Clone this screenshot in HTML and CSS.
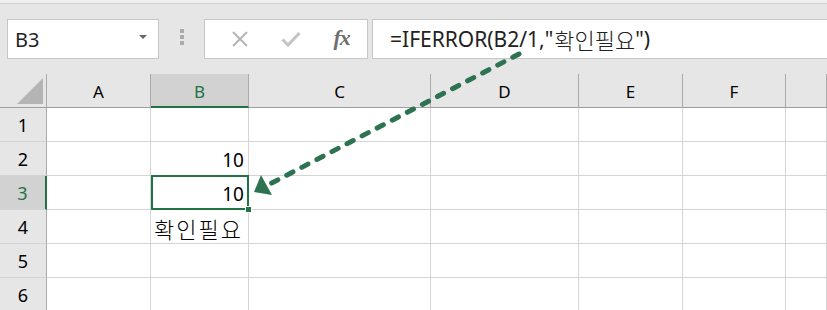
FILE: index.html
```html
<!DOCTYPE html>
<html lang="ko">
<head>
<meta charset="utf-8">
<link rel="stylesheet" href="styles.css">
</head>
<body>
<div class="topstrip"></div>
<div class="fbar">
  <div class="namebox"><span class="nb-text">B3</span><span class="nb-caret"></span></div>
  <div class="grip"><i></i><i></i><i></i></div>
  <div class="fxbox">
    <span class="fxbtn">
      <svg width="18" height="18" viewBox="0 0 18 18"><path d="M2 2 L16 16 M16 2 L2 16" stroke="#b4b4b4" stroke-width="2" fill="none"/></svg>
    </span>
    <span class="fxbtn">
      <svg width="20" height="18" viewBox="0 0 20 18"><path d="M1.5 9.5 L7 15 L18.5 3" stroke="#c4c4c4" stroke-width="3" fill="none"/></svg>
    </span>
    <span class="fxbtn fx">fx</span>
  </div>
  <div class="formula">=IFERROR(B2/1,"<span class="ko-f">확인필요</span>")</div>
</div>
<div class="grid">
  <div class="corner"><span class="tri"></span></div>
  <div class="ch">A</div>
  <div class="ch sel">B</div>
  <div class="ch">C</div>
  <div class="ch">D</div>
  <div class="ch">E</div>
  <div class="ch">F</div>
  <div class="ch"></div>

  <div class="rh">1</div>
  <div class="c"></div><div class="c"></div><div class="c"></div><div class="c"></div><div class="c"></div><div class="c"></div><div class="c"></div>

  <div class="rh">2</div>
  <div class="c"></div><div class="c num">10</div><div class="c"></div><div class="c"></div><div class="c"></div><div class="c"></div><div class="c"></div>

  <div class="rh sel">3</div>
  <div class="c"></div><div class="c num active">10<span class="handle"></span></div><div class="c"></div><div class="c"></div><div class="c"></div><div class="c"></div><div class="c"></div>

  <div class="rh">4</div>
  <div class="c"></div><div class="c ko">확인필요</div><div class="c"></div><div class="c"></div><div class="c"></div><div class="c"></div><div class="c"></div>

  <div class="rh">5</div>
  <div class="c"></div><div class="c"></div><div class="c"></div><div class="c"></div><div class="c"></div><div class="c"></div><div class="c"></div>

  <div class="rh">6</div>
  <div class="c"></div><div class="c"></div><div class="c"></div><div class="c"></div><div class="c"></div><div class="c"></div><div class="c"></div>
</div>
<svg class="arrow" width="827" height="310" viewBox="0 0 827 310">
  <line x1="519" y1="54" x2="268" y2="185" stroke="#2d7352" stroke-width="5" stroke-dasharray="7 10" stroke-linecap="round"/>
  <polygon points="254,192 261,175 272,195" fill="#2d7352"/>
</svg>
</body>
</html>
```
FILE: styles.css
```css
* { box-sizing: border-box; }
html, body {
  margin: 0;
  padding: 0;
}
body {
  width: 827px;
  height: 310px;
  overflow: hidden;
  position: relative;
  background: #e6e6e6;
  font-family: "Noto Sans", "Noto Sans CJK KR", sans-serif;
  color: #000;
}
.topstrip {
  height: 4px;
  background: #efefef;
  border-bottom: 1px solid #d2d2d2;
}
.fbar {
  display: flex;
  height: 40px;
  margin-top: 15px;
  padding-left: 7px;
}
.namebox {
  width: 152px;
  background: #fff;
  border: 1px solid #c6c6c6;
  display: flex;
  align-items: center;
  justify-content: space-between;
  padding: 0 11px 0 7px;
}
.nb-text {
  font-size: 20px;
  color: #222;
}
.nb-caret {
  width: 0;
  height: 0;
  border-left: 4px solid transparent;
  border-right: 4px solid transparent;
  border-top: 4px solid #666;
  margin-bottom: 4px;
}
.grip {
  width: 45px;
  display: flex;
  flex-direction: column;
  align-items: center;
  justify-content: center;
  gap: 2px;
  padding-bottom: 4px;
}
.grip i {
  display: block;
  width: 4px;
  height: 4px;
  background: #ababab;
}
.fxbox {
  width: 164px;
  background: #fff;
  border: 1px solid #c6c6c6;
  display: flex;
  align-items: center;
  padding-left: 10px;
}
.fxbtn {
  width: 54px;
  display: flex;
  align-items: center;
  justify-content: center;
}
.fx {
  font-family: "Liberation Serif", serif;
  font-style: italic;
  font-weight: bold;
  font-size: 22px;
  color: #6e6e6e;
  letter-spacing: -1px;
  padding-bottom: 3px;
}
.formula {
  flex: 1;
  margin-left: 4px;
  background: #fff;
  border: 1px solid #c6c6c6;
  border-right: none;
  display: flex;
  align-items: center;
  padding-left: 17px;
  font-size: 21px;
  color: #222;
  white-space: nowrap;
}
.ko-f {
  font-family: "Noto Sans CJK KR", sans-serif;
  font-size: 22px;
  font-weight: 300;
  padding-left: 1px;
}
.grid {
  margin-top: 15px;
  display: grid;
  grid-template-columns: 47px 104px 98px 182px 148px 104px 103px 41px;
  grid-template-rows: 34px repeat(6, 34px);
}
.corner {
  position: relative;
  border-right: 1px solid #ababab;
  border-bottom: 1px solid #9e9e9e;
}
.tri {
  position: absolute;
  right: 3px;
  bottom: 3px;
  width: 26px;
  height: 26px;
  background: #b4b4b4;
  clip-path: polygon(100% 0, 100% 100%, 0 100%);
}
.ch {
  border-right: 1px solid #ababab;
  border-bottom: 1px solid #9e9e9e;
  display: flex;
  align-items: center;
  justify-content: center;
  font-size: 17px;
  padding-top: 2px;
}
.ch.sel {
  background: #d2d2d2;
  color: #217346;
  border-bottom: 2px solid #217346;
}
.rh {
  border-right: 1px solid #ababab;
  border-bottom: 1px solid #d4d4d4;
  display: flex;
  align-items: center;
  justify-content: center;
  font-size: 18px;
  padding-top: 1px;
}
.rh.sel {
  background: #d2d2d2;
  color: #217346;
  border-right: 2px solid #217346;
}
.c {
  background: #fff;
  border-right: 1px solid #d4d4d4;
  border-bottom: 1px solid #d4d4d4;
  font-size: 19px;
  display: flex;
  align-items: center;
  padding: 2px 4px 0 4px;
  position: relative;
}
.num {
  justify-content: flex-end;
}
.ko {
  font-family: "Noto Sans CJK KR", sans-serif;
  font-size: 22px;
  font-weight: 300;
  letter-spacing: 2px;
  padding-left: 3px;
  white-space: nowrap;
}
.active {
  z-index: 2;
}
.active::after {
  content: "";
  position: absolute;
  top: -1px;
  left: 0;
  right: -1px;
  bottom: -1px;
  border: 2px solid #217346;
}
.handle {
  position: absolute;
  right: -4px;
  bottom: -4px;
  width: 7px;
  height: 7px;
  background: #217346;
  border: 1px solid #fff;
  z-index: 3;
}
.arrow {
  position: absolute;
  top: 0;
  left: 0;
  pointer-events: none;
}
```
